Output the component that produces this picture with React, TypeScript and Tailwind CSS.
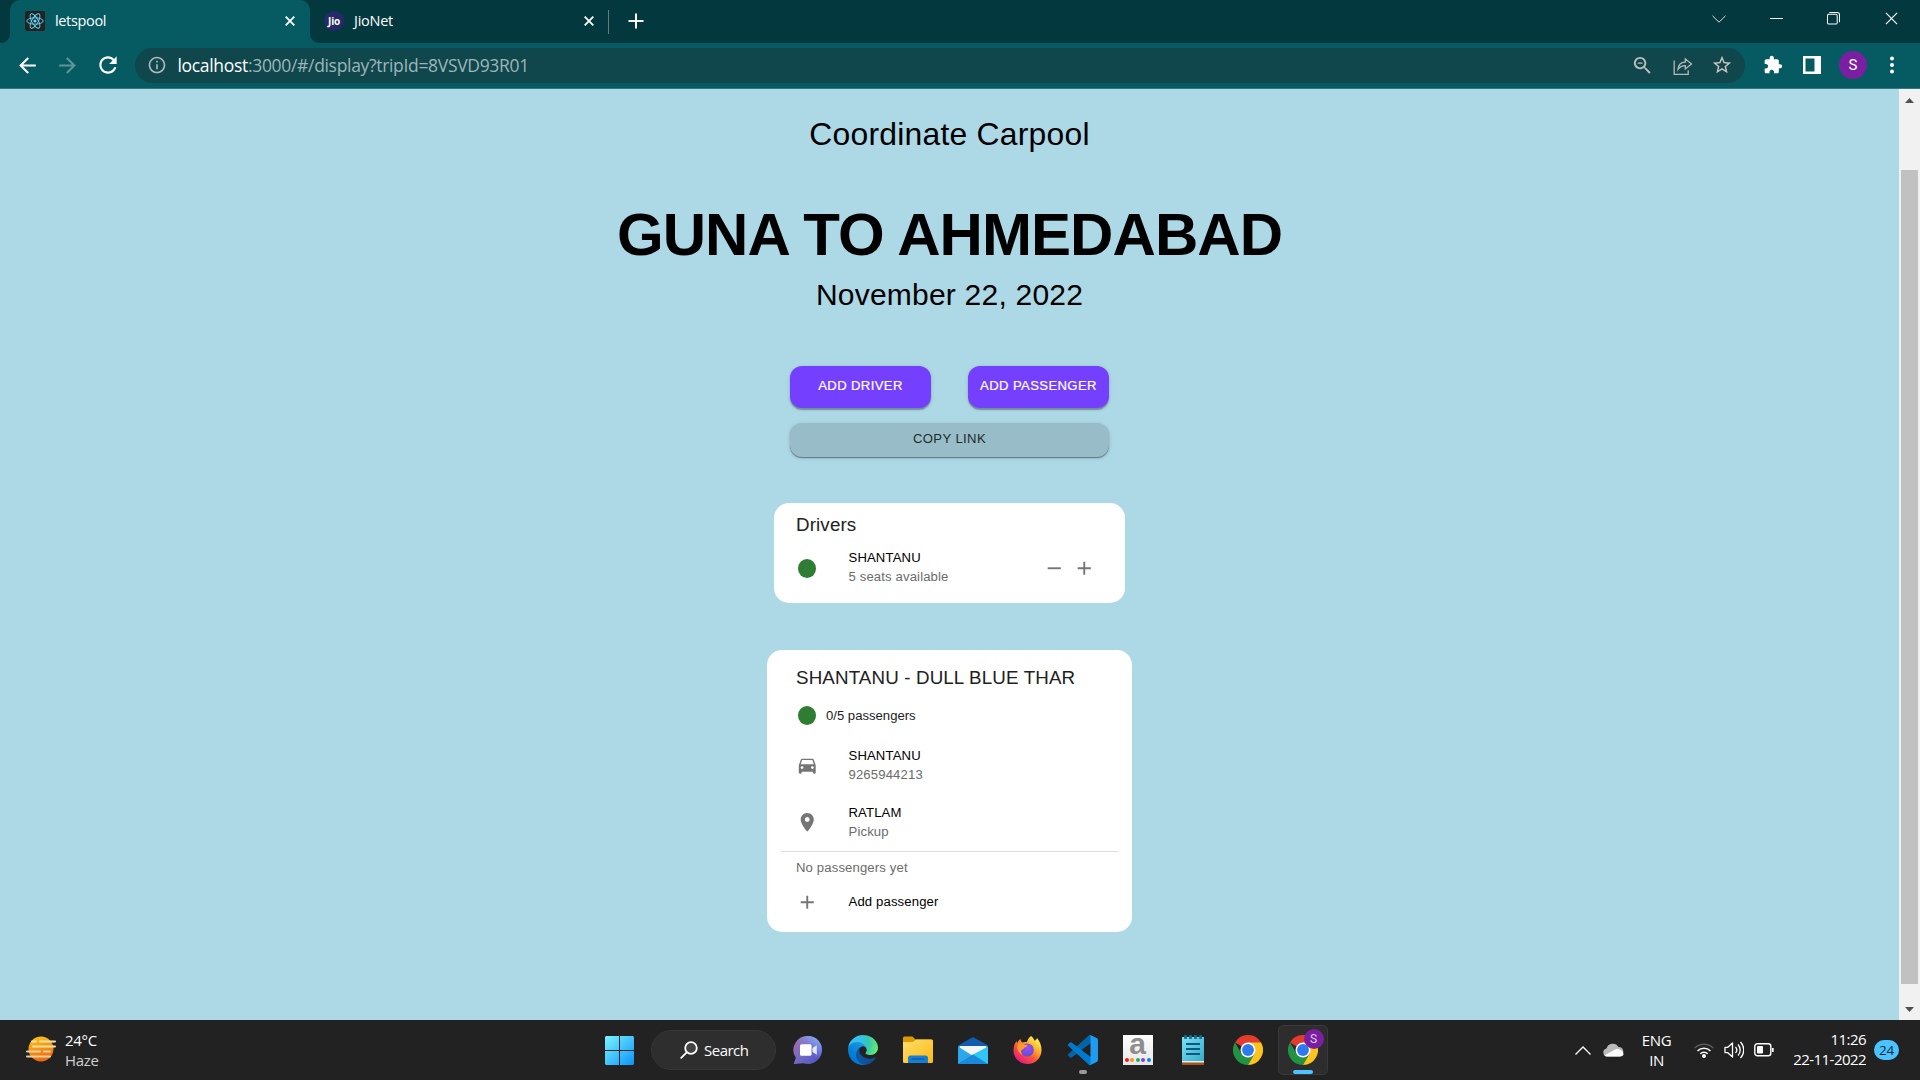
import React from "react";

type P = { d: string; size?: number; fill?: string; className?: string };
const Glyph = ({ d, size = 22.5, fill = "#757575", className = "" }: P) => (
  <svg width={size} height={size} viewBox="0 0 24 24" fill={fill} className={`shrink-0 ${className}`}>
    <path d={d} />
  </svg>
);

const PLUS = "M19 13h-6v6h-2v-6H5v-2h6V5h2v6h6v2z";
const MINUS = "M19 13H5v-2h14v2z";
const CAR =
  "M18.92 6.01C18.72 5.42 18.16 5 17.5 5h-11c-.66 0-1.21.42-1.42 1.01L3 12v8c0 .55.45 1 1 1h1c.55 0 1-.45 1-1v-1h12v1c0 .55.45 1 1 1h1c.55 0 1-.45 1-1v-8l-2.08-5.99zM6.5 16c-.83 0-1.5-.67-1.5-1.5S5.67 13 6.5 13s1.5.67 1.5 1.5S7.33 16 6.5 16zm11 0c-.83 0-1.5-.67-1.5-1.5s.67-1.5 1.5-1.5 1.5.67 1.5 1.5-.67 1.5-1.5 1.5zM5 11l1.5-4.5h11L19 11H5z";
const PIN =
  "M12 2C8.13 2 5 5.13 5 9c0 5.25 7 13 7 13s7-7.75 7-13c0-3.87-3.13-7-7-7zm0 9.5c-1.38 0-2.5-1.12-2.5-2.5s1.12-2.5 2.5-2.5 2.5 1.12 2.5 2.5-1.12 2.5-2.5 2.5z";
const BACK = "M20 11H7.83l5.59-5.59L12 4l-8 8 8 8 1.41-1.41L7.83 13H20v-2z";
const FORWARD = "M12 4l-1.41 1.41L16.17 11H4v2h12.17l-5.58 5.59L12 20l8-8z";
const RELOAD =
  "M17.65 6.35C16.2 4.9 14.21 4 12 4c-4.42 0-7.99 3.58-7.99 8s3.57 8 7.99 8c3.73 0 6.84-2.55 7.73-6h-2.08c-.82 2.33-3.04 4-5.65 4-3.31 0-6-2.69-6-6s2.69-6 6-6c1.66 0 3.14.69 4.22 1.78L13 11h7V4l-2.35 2.35z";
const INFO =
  "M11 7h2v2h-2zm0 4h2v6h-2zm1-9C6.48 2 2 6.48 2 12s4.48 10 10 10 10-4.48 10-10S17.52 2 12 2zm0 18c-4.41 0-8-3.59-8-8s3.59-8 8-8 8 3.59 8 8-3.59 8-8 8z";
const ZOOM_OUT =
  "M15.5 14h-.79l-.28-.27C15.41 12.59 16 11.11 16 9.5 16 5.91 13.09 3 9.5 3S3 5.91 3 9.5 5.91 16 9.5 16c1.61 0 3.09-.59 4.23-1.57l.27.28v.79l5 4.99L20.49 19l-4.99-5zm-6 0C7.01 14 5 11.99 5 9.5S7.01 5 9.5 5 14 7.01 14 9.5 11.99 14 9.5 14zM7 8.800h5v1.400H7z";
const STAR =
  "M22 9.24l-7.19-.62L12 2 9.19 8.63 2 9.24l5.46 4.73L5.82 21 12 17.27 18.18 21l-1.63-7.03L22 9.24zM12 15.4l-3.76 2.27 1-4.28-3.32-2.88 4.38-.38L12 6.1l1.71 4.04 4.38.38-3.32 2.88 1 4.28L12 15.4z";
const PUZZLE =
  "M20.5 11H19V7c0-1.1-.9-2-2-2h-4V3.5C13 2.12 11.88 1 10.5 1S8 2.12 8 3.5V5H4c-1.1 0-1.99.9-1.99 2v3.8H3.5c1.49 0 2.7 1.21 2.7 2.7s-1.21 2.7-2.7 2.7H2V20c0 1.1.9 2 2 2h3.8v-1.5c0-1.49 1.21-2.7 2.7-2.7 1.49 0 2.7 1.21 2.7 2.7V22H17c1.1 0 2-.9 2-2v-4h1.5c1.38 0 2.5-1.12 2.5-2.5S21.88 11 20.5 11z";

const Cross = ({ size = 11, w = 1.8, color = "#fff" }: { size?: number; w?: number; color?: string }) => (
  <svg width={size} height={size} viewBox="0 0 10 10" stroke={color} strokeWidth={w} className="shrink-0">
    <path d="M.7.7l8.6 8.6M9.3.7L.7 9.3" />
  </svg>
);

const ReactLogo = () => (
  <svg width="20" height="20" viewBox="0 0 20 20" className="shrink-0">
    <rect width="20" height="20" rx="2" fill="#222" />
    <g fill="none" stroke="#61dafb" strokeWidth=".9">
      <ellipse cx="10" cy="10" rx="8.2" ry="3.2" />
      <ellipse cx="10" cy="10" rx="8.2" ry="3.2" transform="rotate(60 10 10)" />
      <ellipse cx="10" cy="10" rx="8.2" ry="3.2" transform="rotate(120 10 10)" />
    </g>
    <circle cx="10" cy="10" r="1.6" fill="#61dafb" />
  </svg>
);

const TabStrip = () => (
  <div className="flex h-[43px] bg-[#03393e]">
    <div className="flex w-[10px] items-end bg-[#055b61]">
      <div className="h-full w-full rounded-br-[9px] bg-[#03393e]" />
    </div>
    <div className="w-[300px] bg-[#03393e]">
      <div className="flex h-full items-center rounded-t-[10px] bg-[#055b61] pr-[15px] pb-px pl-[15px]">
        <ReactLogo />
        <span className="ml-[10px] pb-px text-[14.5px] tracking-[-0.35px] text-white">letspool</span>
        <span className="flex-1" />
        <Cross size={10} />
      </div>
    </div>
    <div className="w-[298px] bg-[#055b61]">
      <div className="flex h-full items-center rounded-bl-[9px] bg-[#03393e] pb-px pl-[14px]">
        <span className="flex h-[20px] w-[20px] items-center justify-center rounded-full bg-[#262a68] text-[10px] font-bold tracking-[-0.2px] text-white">
          Jio
        </span>
        <span className="ml-[10px] pb-px text-[14.5px] tracking-[-0.25px] text-white">JioNet</span>
        <span className="flex-1" />
        <span className="mr-[14px] flex">
          <Cross size={10} />
        </span>
      </div>
    </div>
    <div className="flex flex-1 items-center">
      <span className="h-6 w-px bg-[#5d7f82]" />
      <svg width="16" height="16" viewBox="0 0 16 16" stroke="#fff" strokeWidth="2" className="mb-px ml-[19px]">
        <path d="M8 .5v15M.5 8h15" />
      </svg>
      <span className="flex-1" />
      <svg width="14" height="8" viewBox="0 0 14 8" fill="none" stroke="#d5dfe0" strokeWidth="1" className="mr-[44px] mb-[6px]">
        <path d="M.5.8L7 7.2 13.5.8" />
      </svg>
      <span className="mr-[44px] mb-[6px] h-px w-[13px] bg-white" />
      <svg width="13" height="13" viewBox="0 0 14 14" fill="none" stroke="#fff" strokeWidth="1.1" className="mr-[45px] mb-[6px]">
        <rect x=".5" y="2.5" width="10.5" height="10.5" rx="1.5" />
        <path d="M2.5 .5h8.5a2.5 2.5 0 0 1 2.5 2.5v8" />
      </svg>
      <span className="mr-[22px] mb-[6px] flex">
        <Cross size={13} w={0.9} />
      </span>
    </div>
  </div>
);

const Toolbar = () => (
  <div className="flex h-[46px] items-center border-b border-[#2f7a7f] bg-[#055b61] pb-px">
    <Glyph d={BACK} size={25} fill="#fff" className="ml-[15px]" />
    <Glyph d={FORWARD} size={25} fill="#5e9599" className="ml-[15px]" />
    <Glyph d={RELOAD} size={26} fill="#fff" className="ml-[15px]" />
    <div className="ml-[14px] flex h-[35px] w-[1610px] items-center rounded-full bg-[#0f474d]">
      <Glyph d={INFO} size={20} fill="#adb9bb" className="ml-[12px]" />
      <span className="ml-[10.5px] text-[17.5px] tracking-[-0.32px] whitespace-pre text-[#9eb5b8]">
        <span className="text-white">localhost</span>:3000/#/display?tripId=8VSVD93R01
      </span>
      <span className="flex-1" />
      <Glyph d={ZOOM_OUT} size={23} fill="#bdbdbd" />
      <svg width="20" height="20" viewBox="0 0 20 20" fill="none" stroke="#b5b8b8" strokeWidth="1.3" className="mt-px ml-[19px]">
        <path d="M1.200 4.500v13.800h14v-4" />
        <path d="M5 13.500c.4-5 3-7.300 7.300-7.500V2.800L18.500 8l-6.200 5V9.700c-3.200-.1-5.500 1.200-7.300 3.800z" />
      </svg>
      <Glyph d={STAR} size={22} fill="#c9c4be" className="mr-[12px] ml-[18px]" />
    </div>
    <Glyph d={PUZZLE} size={20} fill="#fff" className="ml-[17.5px]" />
    <svg width="18" height="18" viewBox="0 0 18 18" className="ml-[20.5px]">
      <path fill="#fff" fillRule="evenodd" d="M0 0h18v18H0zM2.500 2.500h9v13h-9z" />
    </svg>
    <span className="ml-[18px] flex h-7 w-7 items-center justify-center rounded-full bg-[#7b1fa2] font-['Roboto'] text-[15px] text-white">
      S
    </span>
    <svg width="4" height="18" viewBox="0 0 4 18" fill="#fff" className="ml-[23px]">
      <circle cx="2" cy="2.500" r="2" />
      <circle cx="2" cy="9" r="2" />
      <circle cx="2" cy="15.500" r="2" />
    </svg>
  </div>
);

const Dot = () => <span className="h-[19px] w-[18px] shrink-0 rounded-[50%] bg-[#2e7d32]" />;

const Lines = ({ top, bottom }: { top: string; bottom: string }) => (
  <div className="flex flex-col text-[13.125px] leading-[19px] tracking-[0.14px]">
    <span className="text-black">{top}</span>
    <span className="text-[#6b6b6b]">{bottom}</span>
  </div>
);

const Page = () => (
  <main className="flex w-[1899px] flex-col items-center bg-[#add8e6] pt-[25px] font-['Liberation_Sans',sans-serif] text-black">
    <h2 className="h-10 text-[31.875px] leading-10 tracking-[0.00735em]">Coordinate Carpool</h2>
    <h1 className="mt-[51px] h-[60px] text-[60px] leading-[60px] font-bold tracking-[-0.01562em]">GUNA TO AHMEDABAD</h1>
    <p className="mt-[10px] h-10 text-[30px] leading-10 tracking-[0.00735em]">November 22, 2022</p>

    <div className="mt-[51px] flex w-[319px] flex-col gap-[15px] text-[13.125px] tracking-[0.02857em]">
      <div className="flex justify-between">
        <button className="h-[42px] w-[141px] rounded-[12px] bg-[#743fff] pb-[3px] text-white shadow-[0_2px_1px_rgba(0,0,0,0.28),0_1px_4px_rgba(0,0,0,0.14)] [-webkit-text-stroke:0.2px_white]">
          ADD DRIVER
        </button>
        <button className="h-[42px] w-[141px] rounded-[12px] bg-[#743fff] pb-[3px] whitespace-nowrap text-white shadow-[0_2px_1px_rgba(0,0,0,0.28),0_1px_4px_rgba(0,0,0,0.14)] [-webkit-text-stroke:0.2px_white]">
          ADD PASSENGER
        </button>
      </div>
      <button className="h-[34px] rounded-[12px] bg-[#98bdc9] pb-[3px] text-[#212a2d] shadow-[0_1px_1px_rgba(0,0,0,0.4),0_1px_4px_rgba(0,0,0,0.14)]">
        COPY LINK
      </button>
    </div>

    <section className="mt-[46px] h-[100px] w-[351px] rounded-[15px] bg-white px-[22px] pt-[10px]">
      <h3 className="text-[18.75px] leading-6 tracking-[0.14px] text-[#212121]">Drivers</h3>
      <div className="mt-[12px] flex h-[38px] items-center pl-[2px]">
        <Dot />
        <div className="ml-[32.5px] flex-1 pb-[2px]">
          <Lines top="SHANTANU" bottom="5 seats available" />
        </div>
        <Glyph d={MINUS} />
        <Glyph d={PLUS} className="mr-[8px] ml-[7.500px]" />
      </div>
    </section>

    <section className="mt-[47px] h-[282px] w-[365px] rounded-[15px] bg-white px-[14px] pt-[16px]">
      <h3 className="pl-[15px] text-[18.75px] leading-6 tracking-[0.14px] text-[#212121]">SHANTANU - DULL BLUE THAR</h3>
      <div className="mt-[16px] flex h-5 items-center pl-[17px]">
        <span className="-mt-px flex">
          <Dot />
        </span>
        <span className="ml-[10px] text-[13.125px] leading-5 text-[#212121]">0/5 passengers</span>
      </div>
      <div className="mt-[20px] flex h-[38px] items-center pl-[15px]">
        <Glyph d={CAR} className="mt-px ml-[-0.5px]" />
        <div className="ml-[30.5px]">
          <Lines top="SHANTANU" bottom="9265944213" />
        </div>
      </div>
      <div className="mt-[19px] flex h-[38px] items-center pl-[15px]">
        <Glyph d={PIN} className="ml-[-0.5px]" />
        <div className="ml-[30.5px]">
          <Lines top="RATLAM" bottom="Pickup" />
        </div>
      </div>
      <div className="mt-[10px] h-px bg-[#dcdcdc]" />
      <p className="mt-[6px] pl-[15px] text-[13.125px] leading-5 tracking-[0.14px] text-[#6b6b6b]">No passengers yet</p>
      <div className="mt-[14px] flex h-5 items-center pl-[15px]">
        <Glyph d={PLUS} className="ml-[-0.5px]" />
        <span className="ml-[30.5px] text-[13.125px] leading-5 tracking-[0.14px] text-black">Add passenger</span>
      </div>
    </section>
  </main>
);

const Scrollbar = () => (
  <div className="flex w-[21px] flex-col items-center bg-[#f1f1f1]">
    <svg width="9" height="5" viewBox="0 0 9 5" className="mt-[9px]" fill="#505050">
      <path d="M4.500 0L9 5H0z" />
    </svg>
    <div className="mt-[67px] mr-[1px] h-[814px] w-[17px] bg-[#c1c1c1]" />
    <svg width="9" height="5" viewBox="0 0 9 5" className="mt-[23px]" fill="#505050">
      <path d="M0 0h9L4.500 5z" />
    </svg>
  </div>
);

const WindowsLogo = () => (
  <svg width="29" height="29" viewBox="0 0 29 29">
    <defs>
      <linearGradient id="win" x1="0" y1="0" x2="1" y2="1" gradientUnits="objectBoundingBox">
        <stop offset="0" stopColor="#7cf3ff" />
        <stop offset="1" stopColor="#0a94fa" />
      </linearGradient>
    </defs>
    <path fill="url(#win)" d="M1 0h13v14H0V1zM15 0h13l1 1v13H15zM0 15h14v14H1l-1-1zM15 15h14v13l-1 1H15z" />
  </svg>
);

const Chat = () => (
  <svg width="30" height="30" viewBox="0 0 30 30">
    <defs>
      <linearGradient id="chat" x1="0.1" y1="0.2" x2="0.9" y2="0.8">
        <stop offset="0" stopColor="#9a6bb0" />
        <stop offset=".5" stopColor="#6f68c4" />
        <stop offset="1" stopColor="#5655c8" />
      </linearGradient>
      <linearGradient id="chat2" x1="0.3" y1="1" x2="1" y2="0.1">
        <stop offset=".4" stopColor="#7b9df0" stopOpacity="0" />
        <stop offset="1" stopColor="#8fb4ff" />
      </linearGradient>
    </defs>
    <path fill="url(#chat)" d="M15 1a14 14 0 1 1-4.500 27.300L1.500 29c-.8 0-.8-.8-.3-1.400l1.600-4.800A14 14 0 0 1 15 1z" />
    <circle cx="15" cy="15" r="14" fill="url(#chat2)" />
    <rect x="7" y="9.300" width="11.500" height="11.400" rx="1.500" fill="#fff" />
    <path d="M19.500 13l4.300-2.800v9.600L19.500 17z" fill="#e4e6fb" />
  </svg>
);

const Edge = () => (
  <svg width="30" height="30" viewBox="0 0 256 256">
    <defs>
      <linearGradient id="e1" x1="63" y1="177" x2="241" y2="177" gradientUnits="userSpaceOnUse">
        <stop offset="0" stopColor="#0c59a4" />
        <stop offset="1" stopColor="#114a8b" />
      </linearGradient>
      <linearGradient id="e2" x1="157" y1="100" x2="46" y2="221" gradientUnits="userSpaceOnUse">
        <stop offset="0" stopColor="#1b9de2" />
        <stop offset=".16" stopColor="#1595df" />
        <stop offset=".67" stopColor="#0680d7" />
        <stop offset="1" stopColor="#0078d4" />
      </linearGradient>
      <radialGradient id="e3" cx="26" cy="60" r="230" gradientUnits="userSpaceOnUse">
        <stop offset="0" stopColor="#35c1f1" />
        <stop offset=".35" stopColor="#34c1ed" />
        <stop offset=".65" stopColor="#36c8b0" />
        <stop offset="1" stopColor="#66eb6e" />
      </radialGradient>
    </defs>
    <path fill="url(#e1)" d="M231 190.500c-3.400 1.800-6.900 3.400-10.500 4.700a101.900 101.900 0 0 1-35.900 6.500c-47.300 0-88.500-32.500-88.500-74.300a31.500 31.500 0 0 1 16.400-27.300c-42.800 1.800-53.800 46.400-53.800 72.500 0 73.900 68.100 81.400 82.800 81.400 7.900 0 19.800-2.300 27-4.600l1.300-.4a128.300 128.300 0 0 0 66.600-52.800 4 4 0 0 0-5.400-5.700z" />
    <path fill="url(#e2)" d="M105.700 241.400a79.200 79.200 0 0 1-22.700-21.300 80.700 80.700 0 0 1 29.500-120c3.200-1.500 8.500-4.100 15.600-4a32.400 32.400 0 0 1 25.700 13 31.900 31.900 0 0 1 6.300 18.700c0-.2 24.500-79.600-80-79.600-43.900 0-80 41.600-80 78.200a130.200 130.200 0 0 0 12.100 56 128 128 0 0 0 156.400 67 75.500 75.500 0 0 1-62.900-8z" />
    <path fill="url(#e3)" d="M152.300 148.900c-.9 1-3.400 2.500-3.400 5.600 0 2.600 1.700 5.200 4.800 7.300 14.300 10 41.400 8.600 41.500 8.600a59.600 59.600 0 0 0 30.300-8.300 61.400 61.400 0 0 0 30.400-52.900c.3-22.400-8-37.300-11.300-43.900C223.500 23.900 177.700 0 128 0A128 128 0 0 0 0 126.200c.5-36.500 36.800-66 80-66 3.500 0 23.500.3 42 10a72.600 72.600 0 0 1 30.900 29.300c6.100 10.600 7.200 24.100 7.200 29.500s-2.700 13.300-7.800 19.900z" />
  </svg>
);

const Folder = () => (
  <svg width="30" height="28" viewBox="0 0 30 28">
    <defs>
      <linearGradient id="fold" x1="0" y1="0" x2="1" y2="1">
        <stop offset="0" stopColor="#ffdf6b" />
        <stop offset="1" stopColor="#fdb813" />
      </linearGradient>
    </defs>
    <path d="M0 2a1.500 1.500 0 0 1 1.500-1.500h8l3 3H28a2 2 0 0 1 2 2V10H0z" fill="#dd9a05" />
    <path d="M0 6h10l3-2.500h15.500A1.500 1.500 0 0 1 30 5v20.500a1.500 1.500 0 0 1-1.500 1.500H1.500A1.500 1.500 0 0 1 0 25.500z" fill="url(#fold)" />
    <path d="M5 27v-5a2.500 2.500 0 0 1 2.500-2.500h15A2.500 2.500 0 0 1 25 22v5z" fill="#1580d2" />
    <path d="M8.500 23h13" stroke="#0a559c" strokeWidth="1.200" />
  </svg>
);

const Mail = () => (
  <svg width="30" height="29" viewBox="0 0 30 29">
    <path d="M15 1l15 8.500v4H0v-4z" fill="#0f5cae" />
    <path d="M1.500 10h27v9h-27z" fill="#f2f5f8" />
    <path d="M0 10.500l15 9.500L0 28z" fill="#29a8ea" />
    <path d="M30 10.500L15 18.500 5 28h25z" fill="#32c6f7" />
    <path d="M0 28l15-9.500L30 28z" fill="#1989dc" />
  </svg>
);

const Firefox = () => (
  <svg width="29" height="30" viewBox="0 0 29 30">
    <defs>
      <linearGradient id="ff" x1="0.85" y1="0.1" x2="0.2" y2="0.95">
        <stop offset="0" stopColor="#fff44f" />
        <stop offset=".3" stopColor="#ffb02e" />
        <stop offset=".6" stopColor="#ff5634" />
        <stop offset="1" stopColor="#e4158a" />
      </linearGradient>
      <radialGradient id="ffc" cx=".5" cy=".3" r=".7">
        <stop offset="0" stopColor="#a24bf5" />
        <stop offset="1" stopColor="#5b50d0" />
      </radialGradient>
    </defs>
    <path fill="url(#ff)" d="M18 1c1.800 1.300 3 3 3.500 4.800 1.500-.6 2.200-1.600 2.500-2.800 2.600 2.900 4.500 7 4.500 12 0 8-6 14-14 14S.5 23 .5 15.500C.5 11 2 8 3.500 6c0 .8.200 1.500.6 2C5 6.500 6.200 5 7.500 4c0 1.600.6 2.700 1.800 3.500 1.500-.7 3.300-.7 4.500-.3C14.500 4.700 16 2.500 18 1z" />
    <circle cx="14.200" cy="15" r="6.600" fill="url(#ffc)" />
    <path d="M4.500 9.500c2-2.300 5.500-1.300 7 .2 1.300 0 2.700.3 3 .9-.2 1.200-2 1.500-3 2-.5 1.300-1.600 1.900-3 2.200-.8 1.500-.3 3.500.8 5-3.500-1-6-6-4.800-10.300z" fill="#ff9b27" />
  </svg>
);

const VSCode = () => (
  <svg width="30" height="30" viewBox="0 0 100 100">
    <path d="M96.500 10.700L75.900.8a6.200 6.200 0 0 0-7.100 1.200L1.300 63.500a4.200 4.200 0 0 0 0 6.200l5.500 5a4.200 4.200 0 0 0 5.300.2L93.400 13.300A4.100 4.100 0 0 1 100 16.600v-.2a6.300 6.300 0 0 0-3.500-5.700z" fill="#0065a9" />
    <path d="M96.500 89.300l-20.600 9.900a6.200 6.200 0 0 1-7.100-1.200L1.300 36.500a4.200 4.200 0 0 1 0-6.200l5.500-5a4.200 4.200 0 0 1 5.300-.2l81.300 61.700a4.100 4.100 0 0 0 6.600-3.300v.2a6.300 6.300 0 0 1-3.500 5.600z" fill="#007acc" />
    <path d="M75.900 99.200a6.200 6.200 0 0 1-7.100-1.200c2.300 2.300 6.200.7 6.200-2.600V4.600c0-3.300-3.900-4.900-6.200-2.600A6.200 6.200 0 0 1 75.900.8l20.600 9.900a6.300 6.300 0 0 1 3.500 5.600v67.400a6.300 6.300 0 0 1-3.500 5.600z" fill="#1f9cf0" />
  </svg>
);

const LetterA = () => (
  <div className="flex h-[30px] w-[30px] flex-col items-center bg-gradient-to-b from-white to-[#e6e6e6]">
    <span className="h-[21px] font-['Liberation_Sans',sans-serif] text-[30px] leading-[17px] font-bold text-[#8e8e8e]">a</span>
    <span className="mt-[1.500px] flex gap-[1.500px]">
      <i className="h-1 w-1 rounded-full bg-[#f01818]" />
      <i className="h-1 w-1 rounded-full bg-[#f7981d]" />
      <i className="h-1 w-1 rounded-full bg-[#23b05a]" />
      <i className="h-1 w-1 rounded-full bg-[#9038d8]" />
      <i className="h-1 w-1 rounded-full bg-[#0a84e0]" />
    </span>
  </div>
);

const Notepad = () => (
  <svg width="22" height="30" viewBox="0 0 22 30">
    <defs>
      <linearGradient id="np" x1="0" y1="0" x2="1" y2="1">
        <stop offset="0" stopColor="#7ce0f4" />
        <stop offset="1" stopColor="#38abcd" />
      </linearGradient>
    </defs>
    <path d="M0 24h22v6H0z" fill="#a5541a" />
    <path d="M0 24h22v3.500H0z" fill="#e8ecee" />
    <path d="M0 2h22v24H0z" fill="url(#np)" />
    <path d="M4 9h14M4 14h14M4 19h14" stroke="#07597c" strokeWidth="1.800" />
    <path d="M3.500 0v4M8.500 0v4M13.500 0v4M18.500 0v4" stroke="#0b6f90" strokeWidth="2.600" />
  </svg>
);

const Chrome = () => (
  <svg width="30" height="30" viewBox="0 0 48 48">
    <path d="M24 24L3.200 12A24 24 0 0 1 44.800 12z" fill="#e33b2e" />
    <path d="M3.200 12A24 24 0 0 0 24 48l10.400-18L24 24l-10.400 6z" fill="#229342" />
    <path d="M44.800 12A24 24 0 0 1 24 48l10.400-18L24 12z" fill="#fcc31e" />
    <circle cx="24" cy="24" r="12" fill="#fff" />
    <circle cx="24" cy="24" r="9.500" fill="#2d79f0" />
  </svg>
);

const Slot = ({ children }: { children: React.ReactNode }) => (
  <div className="flex h-[60px] w-[55px] shrink-0 items-center justify-center">{children}</div>
);

const Taskbar = () => (
  <footer className="flex h-[60px] items-center bg-[#222222] text-white">
    <svg width="30" height="26" viewBox="0 0 30 26" className="mb-[3px] ml-[26px]">
      <defs>
        <linearGradient id="sun" x1="0" y1="0" x2="0.3" y2="1">
          <stop offset="0" stopColor="#ffc81a" />
          <stop offset="1" stopColor="#ee6a10" />
        </linearGradient>
      </defs>
      <circle cx="15" cy="13" r="12.500" fill="url(#sun)" />
      <g stroke="#f9e3a6" strokeWidth="2" strokeLinecap="round">
        <path d="M6 5.500h4M14 5.500h15M7 10.500h22" />
        <path d="M1 15.500h13M18 15.500h6M1 20.500h23" stroke="#ead0a0" />
      </g>
    </svg>
    <div className="ml-[9px] flex w-[539px] flex-col text-[15px] leading-5 tracking-[-0.3px]">
      <span>24°C</span>
      <span className="text-[#cfcfcf]">Haze</span>
    </div>
    <span className="flex w-[47px] justify-start pl-px">
      <WindowsLogo />
    </span>
    <div className="flex h-[40px] w-[125px] items-center rounded-full border border-[#363636] bg-[#2e2e2e] pl-[28px]">
      <svg width="18" height="18" viewBox="0 0 18 18" fill="none" stroke="#fff" strokeWidth="1.800" strokeLinecap="round">
        <circle cx="11" cy="7" r="5.800" fill="#444" />
        <path d="M6.700 11.300L1.200 16.800" />
      </svg>
      <span className="ml-[6px] text-[15px] tracking-[-0.5px]">Search</span>
    </div>
    <div className="ml-[4px] flex">
      <Slot><Chat /></Slot>
      <Slot><Edge /></Slot>
      <Slot><Folder /></Slot>
      <Slot><Mail /></Slot>
      <Slot><Firefox /></Slot>
      <Slot>
        <div className="flex flex-col items-center gap-[5px] pt-[9px]">
          <VSCode />
          <span className="h-1 w-2 rounded-full bg-[#9a9a9a]" />
        </div>
      </Slot>
      <Slot><LetterA /></Slot>
      <Slot><Notepad /></Slot>
      <Slot><Chrome /></Slot>
      <Slot>
        <div className="relative flex h-[50px] w-[50px] shrink-0 flex-col items-center gap-[5px] rounded-[5px] border border-[#393939] bg-[#2d2d2d] pt-[9px]">
          <Chrome />
          <span className="h-1 w-5 rounded-full bg-[#4cc2ff]" />
          <span className="absolute top-[3px] right-[3px] flex h-5 w-5 items-center justify-center rounded-full bg-[#7b1fa2] font-['Roboto'] text-[12px] text-[#e0c8ea]">
            S
          </span>
        </div>
      </Slot>
    </div>
    <span className="flex-1" />
    <svg width="16" height="9" viewBox="0 0 16 9" fill="none" stroke="#fff" strokeWidth="1.300">
      <path d="M.5 8.500L8 1l7.500 7.500" />
    </svg>
    <svg width="21" height="14" viewBox="0 0 21 14" className="ml-[12px]">
      <path d="M4 13.500A4 4 0 0 1 3.500 5.600 6.500 6.500 0 0 1 15.500 4 4.800 4.800 0 0 1 16.500 13.500z" fill="#b9b9b9" />
      <path d="M4 13.500a4 4 0 0 1-2.500-1L12 6.500c3-1.200 5 .2 5.500.5a4.500 4.500 0 0 1 3 4c0 1.500-1.500 2.500-3 2.500z" fill="#fff" />
    </svg>
    <div className="ml-[15px] flex w-[35px] flex-col items-center text-[15px] leading-5 tracking-[-0.4px]">
      <span>ENG</span>
      <span>IN</span>
    </div>
    <svg width="20" height="16" viewBox="0 0 20 16" fill="none" stroke="#fff" strokeWidth="1.500" className="ml-[20px]">
      <path d="M.8 6a13 13 0 0 1 18.400 0" stroke="#5a5a5a" />
      <path d="M3.500 9a9.200 9.200 0 0 1 13 0M6.300 11.800a5.200 5.200 0 0 1 7.400 0" />
      <circle cx="10" cy="14" r="1.200" fill="#fff" />
    </svg>
    <svg width="20" height="18" viewBox="0 0 20 18" fill="none" stroke="#fff" strokeWidth="1.300" className="ml-[10px]">
      <path d="M1 6.300h2.800L8.500 2v14l-4.700-4.300H1z" strokeLinejoin="round" />
      <path d="M11.500 6a4.500 4.500 0 0 1 0 6M14 3.500a8 8 0 0 1 0 11M16.500 1a11.500 11.500 0 0 1 0 16" />
    </svg>
    <svg width="20" height="14" viewBox="0 0 20 14" fill="none" stroke="#fff" strokeWidth="1.400" className="ml-[10px]">
      <rect x=".8" y=".8" width="16" height="12" rx="2.500" />
      <path d="M18.800 5v4" strokeWidth="1.800" />
      <rect x="3" y="3" width="6" height="7.600" rx="1" fill="#fff" stroke="none" />
    </svg>
    <div className="-mt-[3px] ml-[19px] flex w-[73px] flex-col items-end text-[15px] leading-5 tracking-[-0.55px] whitespace-nowrap">
      <span>11:26</span>
      <span>22-11-2022</span>
    </div>
    <span className="mr-[21px] ml-[8px] flex h-[20px] w-[25px] items-center justify-center rounded-full bg-[#4cc2ff] text-[13.500px] tracking-[-0.3px] text-[#0b2a3a]">
      24
    </span>
  </footer>
);

export default function App() {
  return (
    <div className="flex h-[1080px] w-[1920px] flex-col overflow-hidden font-['Open_Sans','Noto_Sans',sans-serif]">
      <TabStrip />
      <Toolbar />
      <div className="flex h-[931px]">
        <Page />
        <Scrollbar />
      </div>
      <Taskbar />
    </div>
  );
}
